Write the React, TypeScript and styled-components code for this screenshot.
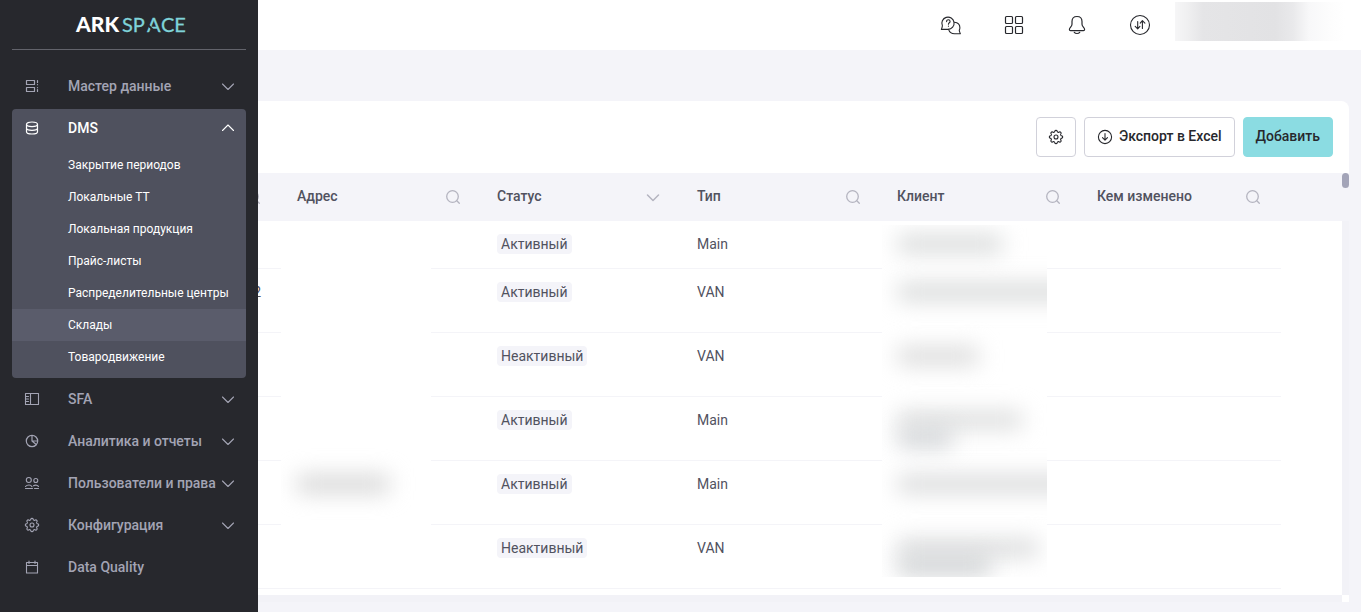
import React from "react";
import styled, { createGlobalStyle, css } from "styled-components";

const GlobalStyle = createGlobalStyle`
  *, *::before, *::after { box-sizing: border-box; }
  html, body, #root { height: 100%; }
  body {
    margin: 0;
    overflow: hidden;
    background: #f4f4f9;
    color: #51525f;
    font: 14px/20px Roboto, "Liberation Sans", sans-serif;
  }
  button { font: inherit; cursor: pointer; }
  a { color: inherit; text-decoration: none; }
  svg { display: block; flex: none; }
`;

const Page = styled.div`
  display: flex;
  flex-direction: column;
  height: 100%;
`;

/* ---------- side menu, opened over the page ---------- */

const Sidebar = styled.aside`
  position: fixed;
  inset: 0 auto 0 0;
  z-index: 5;
  width: 258px;
  padding: 0 12px;
  overflow: hidden;
  background: #27282d;
  color: #a3a4b4;
`;

const LogoLink = styled.a`
  display: flex;
  align-items: center;
  justify-content: center;
  height: 50px;
  margin-bottom: 15px;
  border-bottom: 1px solid #62636b;
`;

const Menu = styled.ul`
  margin: 0;
  padding: 0;
  list-style: none;
`;

const Group = styled.li<{ $open?: boolean }>`
  ${(p) =>
    p.$open &&
    css`
      margin-top: 2px;
      border-radius: 4px;
      background: #4f515e;
      color: #fff;
      overflow: hidden;
    `}
`;

const GroupButton = styled.button<{ $open?: boolean }>`
  display: flex;
  align-items: center;
  width: 100%;
  height: ${(p) => (p.$open ? 38 : 42)}px;
  padding: 0 10px 0 12px;
  border: 0;
  background: none;
  color: inherit;
  font-weight: 500;
  text-align: left;
  white-space: nowrap;
`;

const GroupLabel = styled.span`
  flex: 1;
  margin-left: 28px;
  padding-bottom: 1px;
`;

const SubMenu = styled.ul`
  margin: 0;
  padding: 2px 0 5px;
  list-style: none;
`;

const SubLink = styled.a<{ $active?: boolean }>`
  display: block;
  height: 32px;
  padding: 0 16px 0 56px;
  background: ${(p) => (p.$active ? "#5a5c6b" : "transparent")};
  font-size: 12px;
  line-height: 32px;
  white-space: nowrap;
`;

/* ---------- top bar ---------- */

const TopBar = styled.header`
  display: flex;
  align-items: flex-start;
  justify-content: flex-end;
  flex: none;
  height: 50px;
  padding-right: 16px;
  background: #fff;
`;

const TopActions = styled.nav`
  display: flex;
  align-items: center;
  gap: 39px;
  height: 50px;
  margin-right: 23px;
`;

const TopButton = styled.button`
  display: grid;
  place-items: center;
  width: 24px;
  height: 24px;
  padding: 0;
  border: 0;
  background: none;
  color: #27282d;
`;

const HiddenUser = styled.div`
  width: 170px;
  height: 39px;
  margin-top: 2px;
  background: linear-gradient(
    90deg,
    #f6f6f7 0,
    #f0f0f1 12px,
    #e5e5e7 28px,
    #e2e2e4 100px,
    #e9e9eb 118px,
    #f8f8f9 134px,
    #fdfdfd 156px,
    #fff
  );
`;

/* ---------- card ---------- */

const Card = styled.main`
  display: flex;
  flex-direction: column;
  flex: none;
  margin: 51px 12px 0 77px;
  border-radius: 8px 8px 0 0;
  background: #fff;
  overflow: hidden;
`;

const Toolbar = styled.div`
  display: flex;
  justify-content: flex-end;
  gap: 8px;
  padding: 16px;
`;

const Button = styled.button<{ $primary?: boolean; $icon?: boolean }>`
  display: flex;
  align-items: center;
  justify-content: center;
  gap: 6px;
  height: 40px;
  width: ${(p) => (p.$icon ? "40px" : "auto")};
  padding: 0 ${(p) => (p.$icon ? 0 : 12)}px;
  border: 1px solid ${(p) => (p.$primary ? "#8bdce2" : "#d1d1da")};
  border-radius: 4px;
  background: ${(p) => (p.$primary ? "#8bdce2" : "#fff")};
  color: #27282d;
  font-weight: 500;
  white-space: nowrap;
`;

const ButtonLabel = styled.span`
  padding-bottom: 2px;
`;

const TableArea = styled.div`
  display: grid;
  grid-template-columns: minmax(0, 1fr) 7px;
  grid-template-rows: 422px 7px;
`;

const TableScroll = styled.div`
  overflow: hidden;
  background: linear-gradient(#f4f4f9 48px, #fff 48px);
`;

const TrackY = styled.div`
  background: linear-gradient(#f4f4f9 48px, #f2f2f7 48px);
`;

const Thumb = styled.div`
  height: 15px;
  border-radius: 4px;
  background: #a3a4b8;
`;

const TrackX = styled.div`
  background: #f2f2f7;
`;

const Table = styled.table`
  width: 1200px;
  margin-left: 4px;
  border-collapse: separate;
  border-spacing: 0;
  table-layout: fixed;
`;

const HeadCell = styled.th`
  height: 48px;
  padding: 0 20px 0 16px;
  font-weight: 500;
  text-align: left;
`;

const HeadInner = styled.div`
  display: flex;
  align-items: center;
  justify-content: space-between;
`;

const HeadLabel = styled.span`
  padding-bottom: 2px;
`;

const HeadButton = styled.button`
  display: grid;
  place-items: center;
  width: 16px;
  height: 16px;
  margin-left: auto;
  padding: 0;
  border: 0;
  background: none;
  color: #b4b4c0;
`;

const Row = styled.tr<{ $tall: boolean }>`
  height: ${(p) => (p.$tall ? 64 : 48)}px;
`;

const Cell = styled.td<{ $end?: boolean }>`
  position: relative;
  padding: 13px 20px 0 16px;
  border-bottom: 1px solid #f4f4f8;
  text-align: ${(p) => (p.$end ? "right" : "left")};
  vertical-align: top;
`;

const Tag = styled.span`
  display: inline-block;
  padding: 0 4px;
  border-radius: 4px;
  background: #f4f4f9;
`;

const Veil = styled.div<{ $client?: boolean }>`
  position: absolute;
  z-index: 1;
  top: 4px;
  left: ${(p) => (p.$client ? 1 : 0)}px;
  width: ${(p) => (p.$client ? 165 : 150)}px;
  height: 352px;
  overflow: hidden;
  background: #fff;
`;

const VeilRow = styled.div<{ $tall: boolean }>`
  height: ${(p) => (p.$tall ? 64 : 44)}px;
  padding: ${(p) => (p.$tall ? 14 : 10)}px 0 0 16px;
`;

const Smudge = styled.div<{ $w: number; $tone: string }>`
  width: ${(p) => p.$w}px;
  height: 18px;
  background: ${(p) => p.$tone};
  filter: blur(11px);
`;

/* ---------- icons ---------- */

const Icon = ({
  size = 16,
  box = 16,
  w = 1,
  children,
}: {
  size?: number;
  box?: number;
  w?: number;
  children: React.ReactNode;
}) => (
  <svg
    width={size}
    height={size}
    viewBox={`0 0 ${box} ${box}`}
    fill="none"
    stroke="currentColor"
    strokeWidth={w}
    strokeLinecap="round"
    strokeLinejoin="round"
    aria-hidden="true"
  >
    {children}
  </svg>
);

const Chevron = ({ up, w = 1.1 }: { up?: boolean; w?: number }) => (
  <Icon w={w}>
    <path d={up ? "M2.500 10.500 8 5l5.500 5.500" : "M2.500 6 8 11.500 13.500 6"} />
  </Icon>
);

const Search = () => (
  <Icon w={1.3}>
    <circle cx="7.500" cy="7.500" r="5.800" />
    <path d="m11.800 11.800 2.500 2.500" />
  </Icon>
);

/* Eight soft lobes around the hub */
const gearOutline = Array.from({ length: 96 }, (_, i) => {
  const a = (i / 96) * Math.PI * 2;
  const r = 5.9 + 0.75 * Math.tanh(2 * Math.cos(8 * a));
  return `${(8 + r * Math.cos(a)).toFixed(2)},${(8 + r * Math.sin(a)).toFixed(2)}`;
}).join(" ");

const Gear = () => (
  <Icon w={1.1}>
    <circle cx="8" cy="8" r="2" />
    <polygon points={gearOutline} />
  </Icon>
);

const Servers = () => (
  <Icon w={1.2}>
    <path d="M2.500 2.500h8v4h-8zM2.500 9.500h8v4h-8zM13.500 2.500v2M13.500 6.500v.2M13.500 9.500v.2M13.500 11.500v2" />
  </Icon>
);

const Database = () => (
  <Icon w={1.2}>
    <ellipse cx="8" cy="4.300" rx="5.500" ry="2.300" />
    <path d="M2.500 4.300v7.400C2.500 13 5 14 8 14s5.500-1 5.500-2.300V4.300M2.500 8c0 1.300 2.500 2.300 5.500 2.300s5.500-1 5.500-2.300" />
  </Icon>
);

const Panel = () => (
  <Icon w={1.1}>
    <path d="M1.500 2.500h13v11h-13zM6.500 2.500v11M2 5.500h2.500M2 8h2.500M2 10.500h2.500" />
  </Icon>
);

const Pie = () => (
  <Icon w={1.2}>
    <circle cx="8" cy="8" r="5.700" />
    <path d="M8 2.500V8l4.200 3.500M8 8h5.500" />
  </Icon>
);

const People = () => (
  <Icon w={1.1}>
    <circle cx="4.800" cy="5" r="2.500" />
    <circle cx="11.800" cy="5.500" r="2" />
    <path d="M1.500 11.500c1-1.300 2.200-1.500 3.500-1.500 1.500 0 2.500.8 3 1.800M1.500 13.500h7M9.500 10.800c2-1.300 4.300-.5 5 .7M10.500 13.500h4" />
  </Icon>
);

const Calendar = () => (
  <Icon w={1.1}>
    <path d="M2.500 3.500h11v10.500h-11zM2.500 6.500h11M5 2v2.500M11 2v2.500" />
  </Icon>
);

const Download = () => (
  <Icon w={1.1}>
    <circle cx="8" cy="8" r="6.600" />
    <path d="M8 4.500v6.500M5.500 8.700 8 11.200l2.500-2.500" />
  </Icon>
);

const Help = () => (
  <Icon size={22} box={24} w={1.2}>
    <path d="M2.200 16.800h6.600a6.700 6.700 0 1 0-6.200-3.900c-.1 1.500-.7 3-1.100 3.900z" />
    <path d="M15.700 9c3.500.2 6 2.600 6 6 0 1-.3 2-.7 2.800.1 1.400.8 2.600 1.200 3.700h-6.300c-3.500 0-5.800-2.100-6.500-4.700" />
    <path d="M7.200 8.300c0-1.300.8-2 1.900-2s1.900.8 1.900 1.800c0 1.400-1.800 1.500-1.800 3M9.200 13.200v.2" />
  </Icon>
);

const Apps = () => (
  <Icon size={24} box={24} w={1.2}>
    {[3.5, 13.5].map((x) =>
      [3.5, 13.5].map((y) => <rect key={`${x}-${y}`} x={x} y={y} width="7" height="7" rx="1" />)
    )}
  </Icon>
);

const Bell = () => (
  <Icon size={24} box={24} w={1.2}>
    <path d="M12 3.500c-3.300 0-5 2.300-5 5v2.700c0 2.500-2.600 3.200-2.600 5.300 0 .8.500 1.200 1.200 1.200h12.800c.7 0 1.200-.4 1.200-1.200 0-2.100-2.600-2.800-2.600-5.300V8.500c0-2.700-1.700-5-5-5zM9.300 19.300c1.200 1.600 4.200 1.600 5.400 0" />
  </Icon>
);

const Sync = () => (
  <Icon size={24} box={24} w={1.1}>
    <circle cx="12" cy="12" r="9.500" />
    <path d="M9.700 8.500v7.300M7.200 13.400l2.500 2.500 2.200-2.500M14.400 15.500V7.800M12.200 10.200l2.200-2.500 2.500 2.500" />
  </Icon>
);

const Logo = () => (
  <svg width="118" height="32" viewBox="0 0 118 32" role="img" aria-label="ARKSPACE">
    <g fontFamily="Lato, sans-serif" fontSize="20">
      <text x="6" y="23" fill="#fff" fontSize="21" fontWeight="900">
        ARK
      </text>
      <g fill="#7fd3d9" stroke="#7fd3d9" strokeWidth="0.3">
        <text x="52" y="23">SP</text>
        <text x="77" y="23">A</text>
        <text x="91" y="23">CE</text>
      </g>
    </g>
    <path d="M77 15 88 26" stroke="#27282d" strokeWidth="2" />
  </svg>
);

/* ---------- data ---------- */

const submenu = [
  "Закрытие периодов",
  "Локальные ТТ",
  "Локальная продукция",
  "Прайс-листы",
  "Распределительные центры",
  "Склады",
  "Товародвижение",
];

const menu = [
  { label: "Мастер данные", icon: <Servers />, more: true },
  { label: "DMS", icon: <Database />, more: true, items: submenu },
  { label: "SFA", icon: <Panel />, more: true },
  { label: "Аналитика и отчеты", icon: <Pie />, more: true },
  { label: "Пользователи и права", icon: <People />, more: true },
  { label: "Конфигурация", icon: <Gear />, more: true },
  { label: "Data Quality", icon: <Calendar /> },
];

const columns = ["", "Адрес", "Статус", "Тип", "Клиент", "Кем изменено"];

type Mark = { w: number; tone: string };

const rows: { code?: string; status: string; type: string; address?: Mark[]; client: Mark[] }[] = [
  { status: "Активный", type: "Main", client: [{ w: 104, tone: "#d8dada" }] },
  { code: "2", status: "Активный", type: "VAN", client: [{ w: 190, tone: "#d8dada" }] },
  { status: "Неактивный", type: "VAN", client: [{ w: 80, tone: "#dadada" }] },
  {
    status: "Активный",
    type: "Main",
    client: [
      { w: 124, tone: "#dcdddd" },
      { w: 54, tone: "#cfd2d5" },
    ],
  },
  {
    status: "Активный",
    type: "Main",
    address: [{ w: 92, tone: "#d6d6d6" }],
    client: [{ w: 190, tone: "#d9dadb" }],
  },
  {
    status: "Неактивный",
    type: "VAN",
    client: [
      { w: 140, tone: "#dadbdc" },
      { w: 92, tone: "#cccfd1" },
    ],
  },
];

const ColumnVeil = ({ client }: { client?: boolean }) => (
  <Veil $client={client} aria-hidden="true">
    {rows.map((row, i) => (
      <VeilRow key={i} $tall={i > 0}>
        {(client ? row.client : row.address ?? []).map((mark, j) => (
          <Smudge key={j} $w={mark.w} $tone={mark.tone} />
        ))}
      </VeilRow>
    ))}
  </Veil>
);

export default function App() {
  return (
    <Page>
      <GlobalStyle />
      <Sidebar>
        <LogoLink href="#">
          <Logo />
        </LogoLink>
        <Menu>
          {menu.map((group) => (
            <Group key={group.label} $open={!!group.items}>
              <GroupButton $open={!!group.items} aria-expanded={group.more ? !!group.items : undefined}>
                {group.icon}
                <GroupLabel>{group.label}</GroupLabel>
                {group.more && <Chevron up={!!group.items} />}
              </GroupButton>
              {group.items && (
                <SubMenu>
                  {group.items.map((item) => (
                    <li key={item}>
                      <SubLink href="#" $active={item === "Склады"}>
                        {item}
                      </SubLink>
                    </li>
                  ))}
                </SubMenu>
              )}
            </Group>
          ))}
        </Menu>
      </Sidebar>

      <TopBar>
        <TopActions>
          <TopButton aria-label="Помощь"><Help /></TopButton>
          <TopButton aria-label="Приложения"><Apps /></TopButton>
          <TopButton aria-label="Уведомления"><Bell /></TopButton>
          <TopButton aria-label="Синхронизация"><Sync /></TopButton>
        </TopActions>
        <HiddenUser />
      </TopBar>

      <Card>
        <Toolbar>
          <Button $icon aria-label="Настройки">
            <Gear />
          </Button>
          <Button>
            <Download />
            <ButtonLabel>Экспорт в Excel</ButtonLabel>
          </Button>
          <Button $primary>
            <ButtonLabel>Добавить</ButtonLabel>
          </Button>
        </Toolbar>
        <TableArea>
          <TableScroll>
            <Table>
              <thead>
                <tr>
                  {columns.map((name, i) => (
                    <HeadCell key={i} scope="col">
                      <HeadInner>
                        {name && <HeadLabel>{name}</HeadLabel>}
                        <HeadButton aria-label={name === "Статус" ? "Фильтр" : "Поиск"}>
                          {name === "Статус" ? <Chevron w={1.5} /> : <Search />}
                        </HeadButton>
                      </HeadInner>
                    </HeadCell>
                  ))}
                </tr>
              </thead>
              <tbody>
                {rows.map((row, i) => (
                  <Row key={i} $tall={i > 0}>
                    <Cell $end>{row.code}</Cell>
                    <Cell>{i === 0 && <ColumnVeil />}</Cell>
                    <Cell>
                      <Tag>{row.status}</Tag>
                    </Cell>
                    <Cell>{row.type}</Cell>
                    <Cell>{i === 0 && <ColumnVeil client />}</Cell>
                    <Cell />
                  </Row>
                ))}
              </tbody>
            </Table>
          </TableScroll>
          <TrackY>
            <Thumb />
          </TrackY>
          <TrackX />
        </TableArea>
      </Card>
    </Page>
  );
}
